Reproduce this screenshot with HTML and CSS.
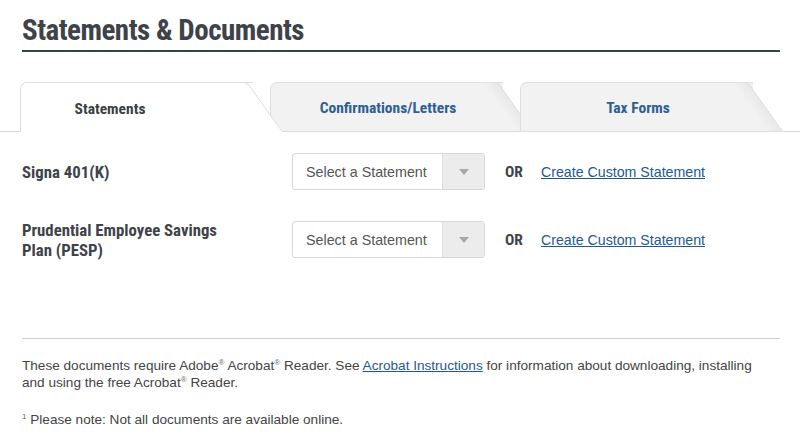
FILE: index.html
```html
<!DOCTYPE html>
<html>
<head>
<meta charset="utf-8">
<link rel="stylesheet" href="styles.css">
</head>
<body>
<div class="page">
  <h1 class="title">Statements &amp; Documents</h1>
  <div class="tabs">
    <div class="tab active"><span class="tab-label">Statements</span></div>
    <div class="tab"><span class="tab-label">Confirmations/Letters</span></div>
    <div class="tab"><span class="tab-label">Tax Forms</span></div>
  </div>
  <div class="rows">
    <div class="row">
      <div class="plan">Signa 401(K)</div>
      <div class="select">
        <span class="select-text">Select a Statement</span>
        <span class="select-btn"><span class="caret"></span></span>
      </div>
      <div class="or">OR</div>
      <a class="link" href="#">Create Custom Statement</a>
    </div>
    <div class="row">
      <div class="plan">Prudential Employee Savings<br>Plan (PESP)</div>
      <div class="select">
        <span class="select-text">Select a Statement</span>
        <span class="select-btn"><span class="caret"></span></span>
      </div>
      <div class="or">OR</div>
      <a class="link" href="#">Create Custom Statement</a>
    </div>
  </div>
  <div class="footer">
    <p class="note">These documents require Adobe<sup>®</sup> Acrobat<sup>®</sup> Reader. See <a class="link" href="#">Acrobat Instructions</a> for information about downloading, installing and using the free Acrobat<sup>®</sup> Reader.</p>
    <p class="foot"><sup>1</sup> Please note: Not all documents are available online.</p>
  </div>
</div>
</body>
</html>
```
FILE: styles.css
```css
html, body {
  margin: 0;
  padding: 0;
  background: #fff;
}
body {
  font-family: "Liberation Sans", Arial, sans-serif;
  color: #444;
}
.page {
  width: 800px;
  overflow: hidden;
}
.title {
  margin: 0 20px 0 22px;
  padding-top: 12px;
  padding-bottom: 2px;
  font-family: "Roboto Condensed", "Open Sans", sans-serif;
  font-weight: bold;
  font-size: 29px;
  letter-spacing: -0.5px;
  line-height: 36px;
  color: #3e434a;
  border-bottom: 2px solid #37434d;
}
.tabs {
  display: flex;
  margin-top: 30px;
  padding-left: 20px;
  border-bottom: 1px solid #dcdcdc;
  height: 49px;
}
.tab {
  position: relative;
  width: 263px;
  height: 49px;
  margin-right: -13px;
  display: flex;
  align-items: center;
  justify-content: center;
  padding-right: 27px;
  box-sizing: border-box;
}
.tab::before {
  content: "";
  position: absolute;
  top: 0;
  left: 0;
  bottom: 0;
  right: 30px;
  background: #f2f2f2;
  border-top: 1px solid #e0e0e0;
  border-left: 1px solid #e0e0e0;
  border-radius: 7px 0 0 0;
}
.tab::after {
  content: "";
  position: absolute;
  top: 0;
  bottom: 0;
  right: 0;
  width: 50px;
  background: linear-gradient(to right, #f2f2f2 70%, #e8e8e8);
  border-top: 1px solid #e0e0e0;
  border-right: 1px solid #d2d2d2;
  border-radius: 0 5px 0 0;
  transform: skewX(35.5deg);
  transform-origin: bottom right;
}
.tab.active {
  z-index: 2;
  height: 50px;
  padding-right: 83px;
}
.tab.active::before,
.tab.active::after {
  background: #fff;
}
.tab-label {
  position: relative;
  z-index: 1;
  font-family: "Roboto Condensed", "Open Sans", sans-serif;
  font-weight: bold;
  font-size: 15.5px;
  color: #2d5e94;
  padding-top: 3px;
}
.tab.active .tab-label {
  color: #3a3f45;
}
.rows {
  padding: 21px 22px 0;
  display: flex;
  flex-direction: column;
  gap: 31px;
}
.row {
  display: flex;
  align-items: center;
  height: 37px;
}
.plan {
  width: 270px;
  font-family: "Roboto Condensed", "Open Sans", sans-serif;
  font-weight: bold;
  font-size: 16.8px;
  line-height: 20px;
  color: #3e434a;
  padding-top: 1px;
}
.select {
  display: flex;
  width: 193px;
  height: 37px;
  box-sizing: border-box;
  border: 1px solid #d8d8d8;
  border-radius: 3px;
  overflow: hidden;
}
.select-text {
  flex: 1;
  display: flex;
  align-items: center;
  padding-left: 13px;
  font-size: 14.3px;
  color: #555;
}
.select-btn {
  width: 41px;
  background: #ececec;
  border-left: 1px solid #dedede;
  display: flex;
  align-items: center;
  justify-content: center;
}
.caret {
  width: 0;
  height: 0;
  border-left: 5px solid transparent;
  border-right: 5px solid transparent;
  border-top: 6px solid #a8a8a8;
}
.or {
  margin-left: 20px;
  width: 36px;
  font-family: "Roboto Condensed", "Open Sans", sans-serif;
  font-weight: bold;
  font-size: 15.5px;
  color: #3e434a;
  padding-top: 1px;
}
.link {
  color: #1e5a8e;
  text-decoration: underline;
  font-size: 14.2px;
}
.footer {
  margin: 80px 20px 0 22px;
  border-top: 1px solid #cfcfcf;
  padding-top: 18px;
}
.note {
  margin: 0;
  font-size: 13.6px;
  line-height: 17px;
  color: #444;
  padding-right: 20px;
}
.note .link {
  font-size: 13.6px;
}
sup {
  font-size: 8px;
  line-height: 0;
  vertical-align: 5px;
  color: #666;
}
.foot {
  margin: 20px 0 0;
  font-size: 13.6px;
  line-height: 17px;
  color: #444;
}
```
